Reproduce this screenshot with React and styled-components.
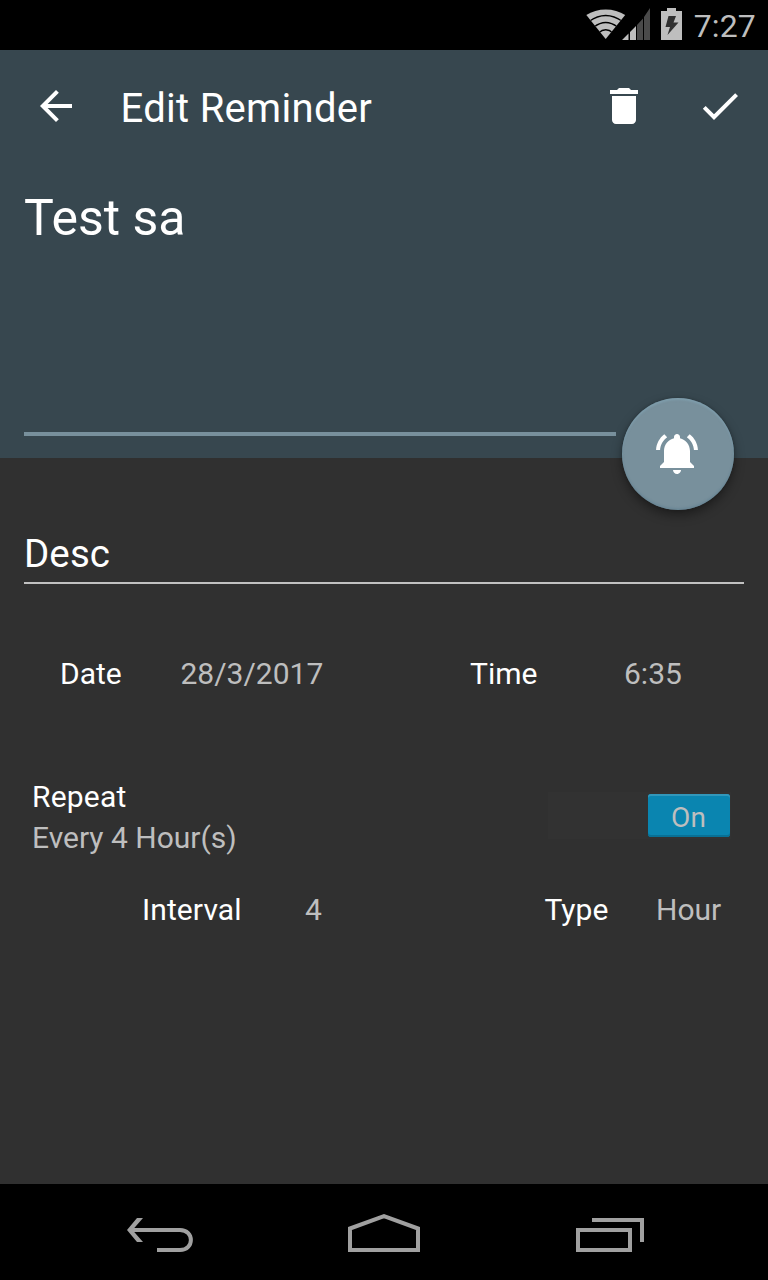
import React from "react";
import styled, { createGlobalStyle } from "styled-components";

const GlobalStyle = createGlobalStyle`
  * { box-sizing: border-box; }
  body { margin: 0; background: #303030; }
`;

const Screen = styled.div`
  display: flex;
  flex-direction: column;
  width: 768px;
  height: 1280px;
  overflow: hidden;
  background: #303030;
  color: #fff;
  font-family: Roboto, "Liberation Sans", sans-serif;
  font-size: 30px;
`;

const StatusBar = styled.header`
  display: flex;
  justify-content: flex-end;
  height: 50px;
  padding-right: 12px;
  background: #000;
`;

const StatusIcons = styled.svg`
  width: 100px;
  height: 50px;
  margin-right: 10px;
`;

const Clock = styled.time`
  color: #bebebe;
  font-size: 32px;
  line-height: 52px;
  letter-spacing: 0.15px;
`;

const Header = styled.section`
  position: relative;
  height: 408px;
  background: #37474f;
`;

const Toolbar = styled.div`
  display: flex;
  align-items: center;
  height: 112px;
  padding: 0 24px 0 32px;
`;

const IconButton = styled.button`
  display: flex;
  padding: 0;
  border: 0;
  background: none;
  color: #fff;
  margin-left: ${(p) => p.$gap || 0}px;
`;

const Glyph = styled.svg`
  display: block;
  width: 48px;
  height: 48px;
  fill: currentColor;
`;

const Title = styled.h1`
  flex: 1;
  margin: 0 0 0 40.5px;
  padding-top: 5px;
  font-size: 40px;
  font-weight: 400;
  letter-spacing: 0.3px;
`;

const ReminderName = styled.div`
  width: 592px;
  height: 274px;
  margin-left: 24px;
  padding-top: 26px;
  border-bottom: 4px solid #78909c;
  font-size: 50px;
  line-height: 60px;
`;

const Fab = styled.button`
  position: absolute;
  right: 34px;
  bottom: -52px;
  display: flex;
  align-items: center;
  justify-content: center;
  width: 112px;
  height: 112px;
  padding: 0;
  border: 0;
  border-radius: 50%;
  background: #78909c;
  color: #fff;
  box-shadow: 0 5px 11px rgba(0, 0, 0, 0.4), 0 0 3px rgba(0, 0, 0, 0.2),
    inset 0 2px 2px rgba(130, 165, 182, 0.6), inset 0 -2px 2px rgba(90, 125, 142, 0.45);
`;

const Form = styled.main`
  display: flex;
  flex-direction: column;
  flex: 1;
`;

const Description = styled.div`
  height: 66px;
  margin: 60px 24px 0;
  padding-top: 12px;
  border-bottom: 2px solid #c1c1c1;
  font-size: 38.5px;
  line-height: 48px;
  letter-spacing: 0.1px;
`;

const Row = styled.div`
  display: flex;
  height: 40px;
  margin-top: ${(p) => p.$top}px;
  line-height: 40px;
`;

const Cell = styled.span`
  width: ${(p) => p.$width}px;
  margin-left: ${(p) => p.$left || 0}px;
  color: ${(p) => (p.$muted ? "#bebebe" : "#fff")};
  letter-spacing: ${(p) => p.$track || 0}px;
  white-space: nowrap;
`;

const RepeatRow = styled.div`
  display: flex;
  justify-content: space-between;
  height: 82px;
  margin-top: 82px;
  padding: 0 37px 0 32px;
`;

const RepeatText = styled.div`
  display: flex;
  flex-direction: column;
  line-height: 41px;
`;

const SwitchTrack = styled.div`
  display: flex;
  justify-content: flex-end;
  width: 183px;
  height: 47px;
  margin-top: 16px;
  padding: 2px 1.5px 2px 0;
  background: #323232;
`;

const SwitchThumb = styled.div`
  width: 82px;
  height: 43px;
  padding-top: 1px;
  border-radius: 3px;
  background: #0a85b0;
  box-shadow: inset 0 2px 0 #3297ba, inset 0 -2px 0 #087095;
  color: #bebebe;
  font-size: 28px;
  line-height: 45px;
  letter-spacing: 0.1px;
  text-align: center;
`;

const NavBar = styled.nav`
  display: flex;
  justify-content: center;
  height: 96px;
  background: #000;
`;

const NavButton = styled.button`
  display: flex;
  justify-content: center;
  width: 225px;
  padding: 0;
  border: 0;
  background: none;
`;

const NavGlyph = styled.svg`
  width: 100px;
  height: 96px;
  fill: none;
  stroke: #a0a0a0;
  stroke-width: 4;
`;

function DeviceStatus() {
  return (
    <StatusIcons viewBox="584 0 100 50" aria-label="Device status">
      <clipPath id="fan">
        <path d="M605.7 39 586.3 15C597 7.500 614.500 7.500 625.200 15Z" />
      </clipPath>
      <g clipPath="url(#fan)">
        <rect x="584" y="6" width="44" height="36" fill="#bebebe" />
        <g fill="none" stroke="#000" strokeWidth="1.400">
          <path d="M589 21.500Q605.700 9.500 622.500 21.500" />
          <path d="M594 27Q605.700 18 617.500 27" />
          <path d="M598.500 33Q605.700 26.500 613 33" />
        </g>
      </g>
      <path d="M622 40 628.500 33.500V40ZM630 32 636 26V40H630Z" fill="#bebebe" />
      <path d="M637 25 643 18.500V40H637ZM644 17 650 8V40H644Z" fill="#4a4a4a" />
      <path d="M661 11H667V8H676V11H682V40H661Z" fill="#bebebe" />
      <path d="M668.500 16H676L673.500 22.500H678.500L667.500 35 670 27H665.500Z" fill="#303030" />
    </StatusIcons>
  );
}

export default function App() {
  return (
    <>
      <GlobalStyle />
      <Screen>
        <StatusBar>
          <DeviceStatus />
          <Clock>7:27</Clock>
        </StatusBar>

        <Header>
          <Toolbar>
            <IconButton aria-label="Back">
              <Glyph viewBox="0 0 24 24">
                <path d="M20 11H7.83l5.59-5.59L12 4l-8 8 8 8 1.41-1.41L7.83 13H20v-2z" />
              </Glyph>
            </IconButton>
            <Title>Edit Reminder</Title>
            <IconButton aria-label="Delete">
              <Glyph viewBox="0 0 24 24">
                <path d="M6 19c0 1.1.9 2 2 2h8c1.1 0 2-.9 2-2V7H6v12zM19 4h-3.500l-1-1h-5l-1 1H5v2h14V4z" />
              </Glyph>
            </IconButton>
            <IconButton aria-label="Save" $gap={48}>
              <Glyph viewBox="0 0 24 24">
                <path d="M9 16.170 4.830 12l-1.420 1.410L9 19 21 7l-1.410-1.410z" />
              </Glyph>
            </IconButton>
          </Toolbar>
          <ReminderName>Test sa</ReminderName>
          <Fab aria-label="Notifications on">
            <Glyph viewBox="0 0 24 24">
              <path d="M6.58 3.58L5.15 2.15C2.76 3.97 1.18 6.8 1.03 10h2c.15-2.65 1.51-4.97 3.55-6.42zM19.97 10h2c-.15-3.2-1.73-6.03-4.13-7.85l-1.43 1.43c2.05 1.45 3.41 3.77 3.56 6.42zM18 10.5c0-3.07-2.13-5.64-5-6.32V3.5c0-.83-.67-1.5-1.5-1.5S10 2.67 10 3.5v.68c-2.87.68-5 3.25-5 6.32V16l-2 2v1h17v-1l-2-2v-5.5zM11.5 22c.14 0 .27-.01.4-.04.65-.13 1.19-.58 1.44-1.18.1-.24.16-.5.16-.78h-4c0 1.1.9 2 2 2z" />
            </Glyph>
          </Fab>
        </Header>

        <Form>
          <Description>Desc</Description>
          <Row $top={70}>
            <Cell $left={60} $width={120.5}>Date</Cell>
            <Cell $width={289.5} $muted>28/3/2017</Cell>
            <Cell $width={154}>Time</Cell>
            <Cell $width={100} $muted>6:35</Cell>
          </Row>
          <RepeatRow>
            <RepeatText>
              <Cell $track={0.2}>Repeat</Cell>
              <Cell $muted>Every 4 Hour(s)</Cell>
            </RepeatText>
            <SwitchTrack>
              <SwitchThumb>On</SwitchThumb>
            </SwitchTrack>
          </RepeatRow>
          <Row $top={32}>
            <Cell $left={142} $width={163} $track={0.1}>Interval</Cell>
            <Cell $width={239.5} $muted>4</Cell>
            <Cell $width={111.5}>Type</Cell>
            <Cell $width={80} $muted>Hour</Cell>
          </Row>
        </Form>

        <NavBar>
          <NavButton aria-label="Back">
            <NavGlyph viewBox="109 1184 100 96">
              <path d="M157 1250H180C194.500 1250 194.500 1230 180 1230H130" />
              <path d="M137 1218H143L132.500 1230 143 1242H137L127 1230Z" fill="#a0a0a0" stroke="none" />
            </NavGlyph>
          </NavButton>
          <NavButton aria-label="Home">
            <NavGlyph viewBox="334 1184 100 96">
              <path d="M350 1250V1228.500L384 1216.200 418 1228.500V1250Z" />
            </NavGlyph>
          </NavButton>
          <NavButton aria-label="Recent apps">
            <NavGlyph viewBox="559 1184 100 96">
              <path d="M578 1230H630V1250H578ZM592 1220H642V1242" />
            </NavGlyph>
          </NavButton>
        </NavBar>
      </Screen>
    </>
  );
}
